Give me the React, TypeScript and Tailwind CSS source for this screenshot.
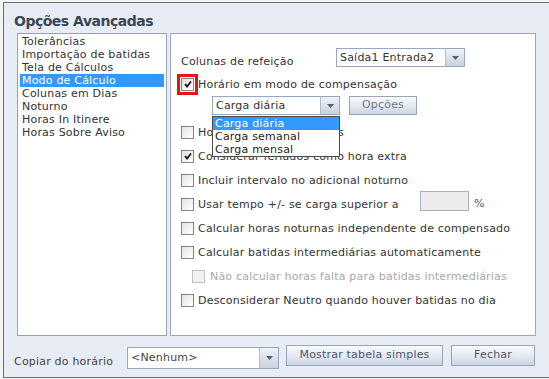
import React from 'react'

const font = "font-['DejaVu_Sans',Verdana,sans-serif]"

function Arrow() {
  return (
    <div className="flex h-full w-[19px] items-center justify-center border-l border-[#b3bdcf] bg-gradient-to-b from-[#eef2f7] to-[#c9d2df]">
      <svg width="7" height="4" viewBox="0 0 7 4">
        <path d="M0 0 L7 0 L3.5 4 Z" fill="#5b6270" />
      </svg>
    </div>
  )
}

function CheckBox({ checked, disabled }: { checked?: boolean; disabled?: boolean }) {
  return (
    <div
      className={`flex h-[13px] w-[13px] shrink-0 items-center justify-center border ${
        disabled ? 'border-[#c2c2c2] bg-[#f0f0f0]' : 'border-[#858585] bg-gradient-to-br from-[#e2e2e2] to-white'
      }`}
    >
      {checked && (
        <svg width="8" height="8" viewBox="0 0 8 8">
          <path d="M1 4 L3 6.5 L7 1.5" fill="none" stroke="#111" strokeWidth="1.8" />
        </svg>
      )}
    </div>
  )
}

function Row({
  label,
  checked,
  disabled,
}: {
  label: string
  checked?: boolean
  disabled?: boolean
}) {
  return (
    <div className={`flex h-[24px] items-center ${disabled ? 'pl-[11px]' : ''}`}>
      <CheckBox checked={checked} disabled={disabled} />
      <span className={`whitespace-nowrap leading-[13px] ${disabled ? 'ml-[5px] text-[#a8a8a8]' : 'ml-[4px] text-[#333]'}`}>
        {label}
      </span>
    </div>
  )
}

function Button({ label, width }: { label: string; width: string }) {
  return (
    <div
      className={`flex h-[21px] ${width} items-center justify-center border border-[#97a3b9] bg-gradient-to-b from-[#f8f9fc] via-[#e6ebf2] to-[#cbd4e1] text-[#4e5868] shadow-[inset_0_1px_0_#fff]`}
    >
      {label}
    </div>
  )
}

const menu = [
  'Tolerâncias',
  'Importação de batidas',
  'Tela de Cálculos',
  'Modo de Cálculo',
  'Colunas em Dias',
  'Noturno',
  'Horas In Itinere',
  'Horas Sobre Aviso',
]

export default function App() {
  return (
    <div className={`h-[379px] w-[549px] overflow-hidden bg-[#f3f4f6] pl-[3px] pt-[2px] text-[11px] tracking-[0.2px] ${font}`}>
      <div className="box-border h-[376px] w-[546px] border-b border-l border-t border-[#6f6f6f] bg-[#e8edf5]">
        <div className="ml-[10px] mt-[10px] text-[14px] font-bold leading-[17px] tracking-[-0.5px] text-[#3d4657]">
          Opções Avançadas
        </div>

        <div className="ml-[13px] mt-[3px] flex h-[303px]">
          {/* lista de seções */}
          <div className="w-[150px] border border-[#93a1ba] bg-white px-[2px] pt-[1px]">
            {menu.map((item) => (
              <div
                key={item}
                className={`h-[13px] pl-[2px] leading-[13px] ${
                  item === 'Modo de Cálculo' ? 'bg-[#3399ff] text-white' : 'text-[#333]'
                }`}
              >
                {item}
              </div>
            ))}
          </div>

          {/* painel de opções */}
          <div className="ml-[3px] w-[366px] border border-[#99a7c0] bg-white pl-[10px] pt-[14px]">
            <div className="flex">
              <div className="w-[155px] pt-[7px] leading-[13px] text-[#333]">Colunas de refeição</div>
              <div className="flex h-[19px] w-[129px] items-center border border-[#98a6bf] bg-white">
                <span className="flex-1 pl-[3px] leading-[13px] text-[#333]">Saída1 Entrada2</span>
                <Arrow />
              </div>
            </div>

            <div className="mt-[4px] flex h-[24px] items-center">
              <div className="relative">
                <CheckBox checked />
                <div className="absolute -inset-[4px] border-[3px] border-[#e3161b]" />
              </div>
              <span className="ml-[4px] leading-[13px] text-[#333]">Horário em modo de compensação</span>
            </div>

            <div className="flex h-[24px] items-start pl-[31px]">
              <div className="relative flex h-[19px] w-[128px] items-center border border-[#98a6bf] bg-white">
                <span className="flex-1 pl-[3px] leading-[13px] text-[#333]">Carga diária</span>
                <Arrow />
                <div className="absolute left-[-1px] top-[19px] z-10 w-[128px] border border-[#4a4a4a] bg-white">
                  <div className="h-[13px] bg-[#3399ff] pl-[2px] leading-[13px] text-white">Carga diária</div>
                  <div className="h-[13px] pl-[2px] leading-[13px] text-[#222]">Carga semanal</div>
                  <div className="h-[13px] pl-[2px] leading-[13px] text-[#222]">Carga mensal</div>
                </div>
              </div>
              <div className="ml-[9px]">
                <div className="flex h-[19px] w-[68px] items-center justify-center border border-[#97a3b9] bg-gradient-to-b from-[#f8f9fc] via-[#e6ebf2] to-[#cbd4e1] text-[#6f7888] shadow-[inset_0_1px_0_#fff]">
                  Opções
                </div>
              </div>
            </div>

            <Row label="Horas noturnas reduzidas" />
            <Row label="Considerar feriados como hora extra" checked />
            <Row label="Incluir intervalo no adicional noturno" />
            <div className="flex h-[24px] items-center">
              <CheckBox />
              <span className="ml-[4px] w-[222px] leading-[13px] text-[#333]">Usar tempo +/- se carga superior a</span>
              <div className="mb-[6px] h-[20px] w-[49px] border border-[#a3afc4] bg-[#ececec]" />
              <span className="mb-[2px] ml-[5px] leading-[13px] text-[#555]">%</span>
            </div>
            <Row label="Calcular horas noturnas independente de compensado" />
            <Row label="Calcular batidas intermediárias automaticamente" />
            <Row label="Não calcular horas falta para batidas intermediárias" disabled />
            <Row label="Desconsiderar Neutro quando houver batidas no dia" />
          </div>
        </div>

        {/* rodapé */}
        <div className="ml-[10px] mt-[9px] flex items-start">
          <div className="mt-[10px] w-[113px] leading-[13px] text-[#444]">Copiar do horário</div>
          <div className="mt-[2px] flex h-[22px] w-[152px] items-start border border-[#9aa7bf] bg-white">
            <span className="flex-1 pl-[3px] pt-[3px] leading-[13px] text-[#444]">&lt;Nenhum&gt;</span>
            <Arrow />
          </div>
          <div className="ml-[7px]">
            <Button label="Mostrar tabela simples" width="w-[157px]" />
          </div>
          <div className="ml-[8px]">
            <Button label="Fechar" width="w-[84px]" />
          </div>
        </div>
      </div>
    </div>
  )
}
